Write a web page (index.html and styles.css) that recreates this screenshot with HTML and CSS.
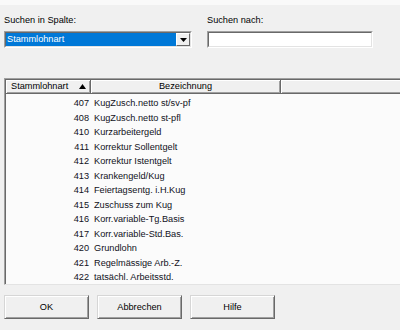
FILE: index.html
```html
<!DOCTYPE html>
<html lang="de">

<head>
  <meta charset="UTF-8">
  <meta name="viewport" content="width=device-width, initial-scale=1.0">
  <title>Suchen</title>
  <link rel="stylesheet" href="styles.css">
</head>

<body>

  <div class="dialog">

    <div class="search">
      <div class="field field-col">
        <label>Suchen in Spalte:</label>
        <div class="sunken">
          <div class="sunken-inner combo">
            <span class="combo-value">Stammlohnart</span>
            <span class="combo-btn">
              <svg width="7" height="4" viewBox="0 0 7 4"><path d="M0 0h7L3.5 4z" fill="#000"/></svg>
            </span>
          </div>
        </div>
      </div>
      <div class="field field-text">
        <label>Suchen nach:</label>
        <div class="sunken">
          <div class="sunken-inner textbox"></div>
        </div>
      </div>
    </div>

    <div class="list">
      <div class="list-head">
        <div class="head-cell col-nr">
          <span>Stammlohnart</span>
          <svg width="7" height="5" viewBox="0 0 7 5"><path d="M3.5 0L7 5H0z" fill="#000"/></svg>
        </div>
        <div class="head-cell col-text center">Bezeichnung</div>
        <div class="head-cell col-rest"></div>
      </div>
      <div class="list-body">
        <div class="row"><span class="col-nr num">407</span><span class="col-text">KugZusch.netto st/sv-pf</span></div>
        <div class="row"><span class="col-nr num">408</span><span class="col-text">KugZusch.netto st-pfl</span></div>
        <div class="row"><span class="col-nr num">410</span><span class="col-text">Kurzarbeitergeld</span></div>
        <div class="row"><span class="col-nr num">411</span><span class="col-text">Korrektur Sollentgelt</span></div>
        <div class="row"><span class="col-nr num">412</span><span class="col-text">Korrektur Istentgelt</span></div>
        <div class="row"><span class="col-nr num">413</span><span class="col-text">Krankengeld/Kug</span></div>
        <div class="row"><span class="col-nr num">414</span><span class="col-text">Feiertagsentg. i.H.Kug</span></div>
        <div class="row"><span class="col-nr num">415</span><span class="col-text">Zuschuss zum Kug</span></div>
        <div class="row"><span class="col-nr num">416</span><span class="col-text">Korr.variable-Tg.Basis</span></div>
        <div class="row"><span class="col-nr num">417</span><span class="col-text">Korr.variable-Std.Bas.</span></div>
        <div class="row"><span class="col-nr num">420</span><span class="col-text">Grundlohn</span></div>
        <div class="row"><span class="col-nr num">421</span><span class="col-text">Regelmässige Arb.-Z.</span></div>
        <div class="row"><span class="col-nr num">422</span><span class="col-text">tatsächl. Arbeitsstd.</span></div>
      </div>
    </div>

    <div class="buttons">
      <button>OK</button>
      <button>Abbrechen</button>
      <button>Hilfe</button>
    </div>

  </div>

</body>

</html>
```

FILE: styles.css
```css
* {
  box-sizing: border-box;
  margin: 0;
  padding: 0;
  font-family: "Liberation Sans", Arial, sans-serif;
}

body {
  background-color: #f0f0f0;
  color: #000;
  font-size: 9.2px;
  overflow: hidden;
  width: 400px;
  height: 330px;
}

.dialog {
  border-top: 5px solid #f9f9f9;
  padding: 9px 0 0 4px;
}

.search {
  display: flex;
  gap: 15px;
}

.field {
  display: flex;
  flex-direction: column;
  gap: 5px;
}

label {
  display: block;
  line-height: 12px;
}

.field-col {
  width: 188px;
}

.field-text {
  width: 166px;
}

.sunken {
  border: 1px solid;
  border-color: #a0a0a0 #fff #fff #a0a0a0;
}

.sunken-inner {
  border: 1px solid;
  border-color: #696969 #e3e3e3 #e3e3e3 #696969;
  height: 15px;
}

.combo {
  display: flex;
  background: #fff;
}

.combo-value {
  flex: 1;
  background: #0078d7;
  color: #fff;
  line-height: 13px;
  padding-left: 1px;
}

.combo-btn {
  width: 14px;
  display: flex;
  align-items: center;
  justify-content: center;
  background: #f0f0f0;
  border: 1px solid;
  border-color: #fff #696969 #696969 #fff;
}

.textbox {
  background: #fff;
}

.list {
  margin-top: 30px;
  margin-right: -10px;
  border: 1px solid;
  border-color: #a0a0a0 #fff #e3e3e3 #a0a0a0;
}

.list-head,
.list-body {
  border-left: 1px solid #696969;
}

.list-head {
  display: flex;
  height: 15px;
  border-top: 1px solid #696969;
}

.head-cell {
  display: flex;
  align-items: center;
  background: #f0f0f0;
  border-right: 1px solid #696969;
  border-bottom: 1px solid #696969;
  box-shadow: inset 1px 1px 0 #fff, inset -1px -1px 0 #a0a0a0;
  line-height: 13px;
}

.col-nr {
  width: 85px;
}

.col-text {
  width: 190px;
}

.head-cell.col-nr {
  justify-content: space-between;
  padding: 0 4px 0 5px;
}

.head-cell.center {
  justify-content: center;
}

.col-rest {
  flex: 1;
}

.list-body {
  height: 190px;
  overflow: hidden;
  background: #fbfbfb;
  padding-top: 2px;
}

.row {
  display: flex;
  line-height: 14.5px;
  color: #111122;
}

.num {
  text-align: right;
  padding-right: 2px;
}

.row .col-text {
  padding-left: 3px;
}

.buttons {
  display: flex;
  gap: 8px;
  margin-top: 10px;
}

button {
  width: 85px;
  height: 24px;
  background: #f0f0f0;
  color: #000;
  font-size: 9.2px;
  border: 1px solid;
  border-color: #d6d6d6 #696969 #696969 #d6d6d6;
  box-shadow: inset 1px 1px 0 #fff, inset -1px -1px 0 #a0a0a0;
}
```
